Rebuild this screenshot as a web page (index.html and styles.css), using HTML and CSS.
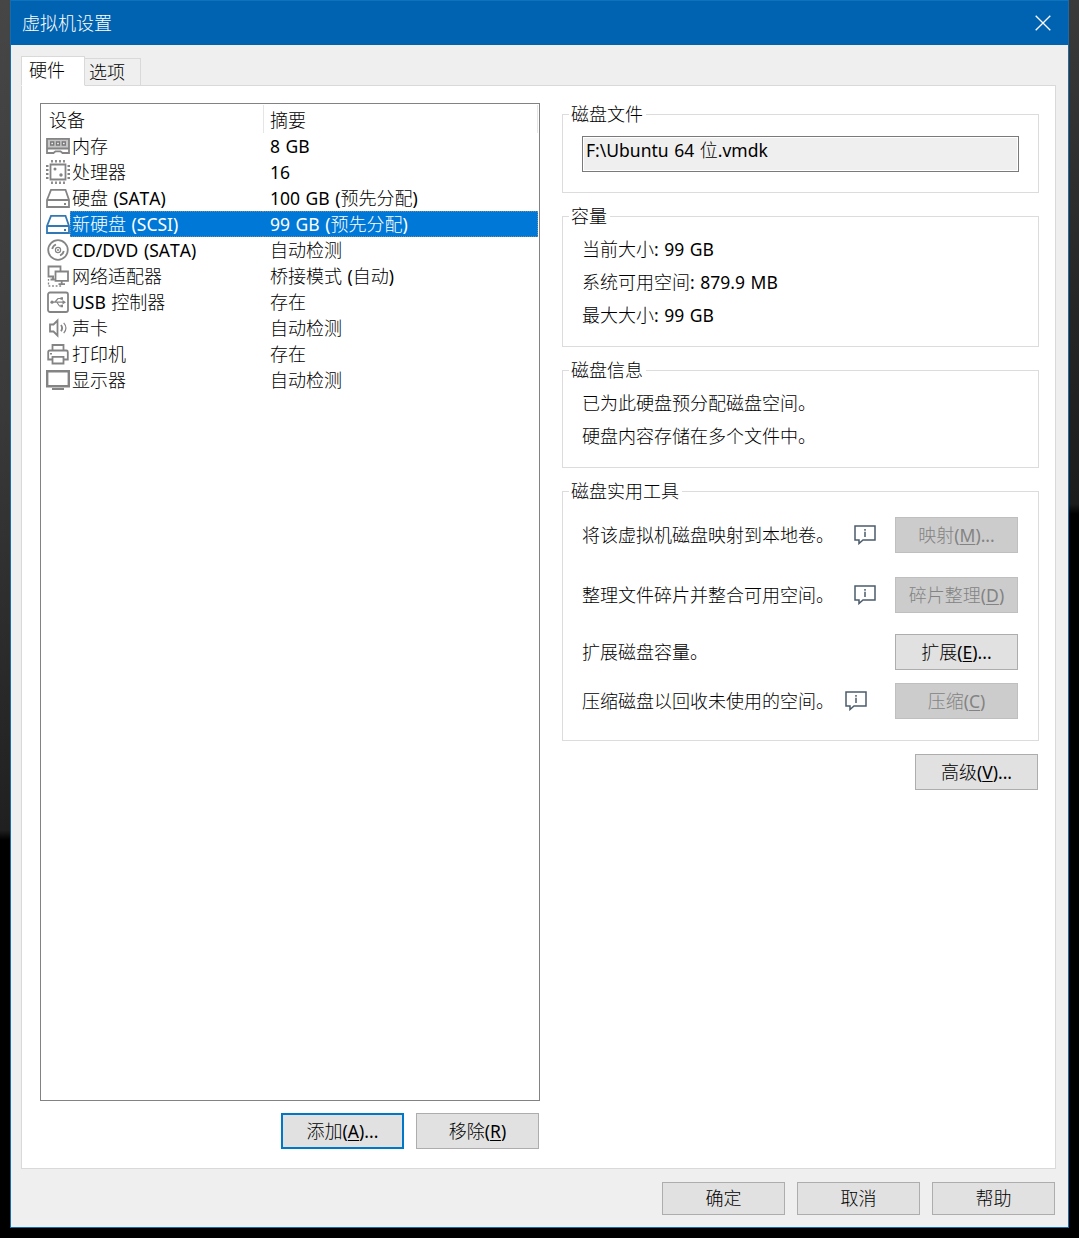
FILE: index.html
```html
<!DOCTYPE html>
<html lang="zh-CN">
<head>
<meta charset="utf-8">
<title>虚拟机设置</title>
<link rel="stylesheet" href="styles.css">
</head>
<body>
<div class="window">
  <header class="titlebar">
    <h1>虚拟机设置</h1>
    <svg class="close" width="16" height="16" viewBox="0 0 16 16"><path d="M.7.7l14.6 14.6M15.3.7L.7 15.3"/></svg>
  </header>
  <nav class="tabs"><div class="tab active">硬件</div><div class="tab">选项</div></nav>
  <main class="panel">
    <section class="left">
      <div class="list">
        <div class="row head"><span class="name">设备</span><span class="sum">摘要</span></div>
        <div class="row">
          <svg class="ico" viewBox="0 0 24 24"><path class="pale" d="M1 5h22v9H1z"/><path class="s" d="M1 4.900V19h6.500l2-1.700h5l2 1.700H23V4.900zM1 14.500h22"/><path class="chip" d="M4.700 8h3v3h-3zM10.500 8h3v3h-3zM16.300 8h3v3h-3z"/></svg>
          <span class="name">内存</span><span class="sum"><i>8 GB</i></span></div>
        <div class="row">
          <svg class="ico" viewBox="0 0 24 24"><path class="s" d="M4.500 4.500h15v15h-15z"/><path class="s" d="M6 0v2.500M10 0v2.500M14 0v2.500M18 0v2.500M6 21.500V24M10 21.500V24M14 21.500V24M18 21.500V24M0 6h2.500M0 10h2.500M0 14h2.500M0 18h2.500M21.500 6H24M21.500 10H24M21.500 14H24M21.500 18H24"/><circle class="f" cx="9" cy="9" r="1.500"/><circle class="f" cx="15" cy="15" r="1.700"/></svg>
          <span class="name">处理器</span><span class="sum"><i>16</i></span></div>
        <div class="row">
          <svg class="ico" viewBox="0 0 24 24"><path class="s" d="M1 14L5 3.800h14.500L23 14v7H1zM1 14h22"/><path class="f" d="M18 17h2v2h-2z"/></svg>
          <span class="name">硬盘<i> (SATA)</i></span><span class="sum"><i>100 GB (</i>预先分配<i>)</i></span></div>
        <div class="row selected">
          <svg class="ico" viewBox="0 0 24 24"><path class="s" d="M1 14L5 3.800h14.500L23 14v7H1zM1 14h22"/><path class="f" d="M18 17h2v2h-2z"/></svg>
          <span class="name">新硬盘<i> (SCSI)</i></span><span class="sum"><i>99 GB (</i>预先分配<i>)</i></span></div>
        <div class="row">
          <svg class="ico" viewBox="0 0 24 24"><circle class="s" cx="12" cy="12" r="9.800"/><circle class="s thin" cx="12" cy="12" r="2.600"/><circle class="f" cx="12" cy="12" r="1"/><path class="s" d="M6.200 11a6 6 0 0 1 3.800-4.500M17.800 13a6 6 0 0 1-3.800 4.500"/></svg>
          <span class="name"><i>CD/DVD (SATA)</i></span><span class="sum">自动检测</span></div>
        <div class="row">
          <svg class="ico" viewBox="0 0 24 24"><path class="s" d="M8 12.500H2.500v-10h12V7M4.500 15.500h4M7 12.500v3M9.500 7.500H22v9.300H9.500zM15.700 17v3M12.500 20.200h6.500"/><path class="s dots" d="M2.500 15v7M2.500 22h14"/></svg>
          <span class="name">网络适配器</span><span class="sum">桥接模式<i> (</i>自动<i>)</i></span></div>
        <div class="row">
          <svg class="ico" viewBox="0 0 24 24"><rect class="s" x="2" y="2.500" width="20" height="19.500" rx="2"/><path class="s thin" d="M6 12.200h12M9 12l3-3.500h3M11 12.500l2.500 3.500H16"/><path class="f" d="M16.500 10l3.500 2.200-3.500 2.200zM14.500 7.200h2.500v2.500h-2.500zM14.500 14.700H17v2.500h-2.500z"/><circle class="f" cx="6" cy="12.200" r="1.600"/></svg>
          <span class="name"><i>USB </i>控制器</span><span class="sum">存在</span></div>
        <div class="row">
          <svg class="ico" viewBox="0 0 24 24"><path class="s" d="M4 8.500h3.500L11.500 4.500v15l-4-4H4zM15 9q2.200 3 0 6.200"/><path class="s thin" d="M17.700 6.800q4.500 5.200 0 10.400"/></svg>
          <span class="name">声卡</span><span class="sum">自动检测</span></div>
        <div class="row">
          <svg class="ico" viewBox="0 0 24 24"><path class="s" d="M6.500 8.500V3h11v5.500M6 17.500H2.200V10q0-1.500 1.500-1.500h16.600q1.500 0 1.500 1.500v7.500H18M6.500 14.800h11V21.500h-11z"/><path class="f" d="M4 11h2v1.500H4z"/></svg>
          <span class="name">打印机</span><span class="sum">存在</span></div>
        <div class="row">
          <svg class="ico" viewBox="0 0 24 24"><path class="s thick" d="M1.200 3.200h21.600v15H1.200z"/><path class="f" d="M6 20h12v2H6z"/></svg>
          <span class="name">显示器</span><span class="sum">自动检测</span></div>
      </div>
      <div class="actions"><button class="btn primary">添加<i>(<u>A</u>)...</i></button><button class="btn">移除<i>(<u>R</u>)</i></button></div>
    </section>
    <section class="right">
      <fieldset class="file"><legend>磁盘文件</legend><div class="field"><i>F:\Ubuntu 64 </i>位<i>.vmdk</i></div></fieldset>
      <fieldset class="capacity"><legend>容量</legend>
        <p>当前大小<i>: 99 GB</i></p><p>系统可用空间<i>: 879.9 MB</i></p><p>最大大小<i>: 99 GB</i></p></fieldset>
      <fieldset class="info"><legend>磁盘信息</legend><p>已为此硬盘预分配磁盘空间。</p><p>硬盘内容存储在多个文件中。</p></fieldset>
      <fieldset class="tools"><legend>磁盘实用工具</legend>
        <div class="tool map"><span>将该虚拟机磁盘映射到本地卷。</span><svg class="tip" viewBox="0 0 22 20"><path d="M1 1h20v14H9l-4 3.500V15H1z"/><path d="M11 6.800V12M11 4v1.700"/></svg><button class="btn" disabled>映射<i>(<u>M</u>)...</i></button></div>
        <div class="tool defrag"><span>整理文件碎片并整合可用空间。</span><svg class="tip" viewBox="0 0 22 20"><path d="M1 1h20v14H9l-4 3.500V15H1z"/><path d="M11 6.800V12M11 4v1.700"/></svg><button class="btn" disabled>碎片整理<i>(<u>D</u>)</i></button></div>
        <div class="tool expand"><span>扩展磁盘容量。</span><button class="btn">扩展<i>(<u>E</u>)...</i></button></div>
        <div class="tool compact"><span>压缩磁盘以回收未使用的空间。</span><svg class="tip" viewBox="0 0 22 20"><path d="M1 1h20v14H9l-4 3.500V15H1z"/><path d="M11 6.800V12M11 4v1.700"/></svg><button class="btn" disabled>压缩<i>(<u>C</u>)</i></button></div>
      </fieldset>
      <button class="btn advanced">高级<i>(<u>V</u>)...</i></button>
    </section>
  </main>
  <footer class="footer"><button class="btn">确定</button><button class="btn">取消</button><button class="btn">帮助</button></footer>
</div>
</body>
</html>
```
FILE: styles.css
```css
* { box-sizing: border-box; margin: 0; padding: 0; }
body {
  height: 1238px;
  padding: 0 10px;
  overflow: hidden;
  background:
    linear-gradient(#464646, #3a3a3a 400px, #202020 830px, #000 840px) 0 0 / 10px 100% no-repeat,
    linear-gradient(#3a3a3a, #262626 300px, #1c1c1c 504px, #000 514px) 100% 0 / 10px 100% no-repeat,
    #000;
  color: #000;
  font: 300 18px/26px "Noto Sans CJK SC", sans-serif;
}
i {
  font: normal 400 17.5px/20px "Noto Sans", sans-serif;
  font-kerning: none;
  word-spacing: 1px;
  white-space: pre;
}
u { text-underline-offset: 2px; text-decoration-thickness: 1px; }

.window {
  display: flex;
  flex-direction: column;
  height: 1228px;
  border: 1px solid #1a6ca8;
  border-top: 0;
  background: #efefef;
}
.titlebar {
  display: flex;
  justify-content: space-between;
  align-items: center;
  height: 45px;
  padding: 0 17px 0 11px;
  border-top: 1px solid #0f72bd;
  background: #0063b1;
  color: #fff;
}
h1 { padding-bottom: 3px; font-size: 18px; font-weight: 300; }
.close { fill: none; stroke: #fff; stroke-width: 1.3; }

.tabs {
  display: flex;
  align-items: flex-end;
  height: 41px;
  padding-left: 10px;
  margin-bottom: -1px;
  z-index: 1;
}
.tab {
  width: 56px;
  height: 28px;
  padding-left: 4px;
  border: 1px solid #d9d9d9;
  border-left: 0;
  line-height: 25px;
}
.tab.active {
  width: 64px;
  height: 30px;
  padding-left: 7px;
  border-left: 1px solid #d9d9d9;
  border-bottom-color: #fff;
  background: #fff;
}

.panel {
  display: flex;
  gap: 22px;
  height: 1084px;
  margin: 0 12px 0 10px;
  padding: 17px 16px 0 18px;
  border: 1px solid #d9d9d9;
  background: #fff;
}
.left { width: 500px; }
.list { height: 998px; padding-right: 1px; border: 1px solid #828282; }
.row { display: grid; grid-template-columns: 29px 193px 1fr; height: 26px; line-height: 24px; }
.row > * { height: 26px; white-space: nowrap; }
.name { padding-left: 2px; }
.sum { padding-left: 7px; }
.head { grid-template-columns: 223px 1fr; height: 29px; padding-top: 1px; }
.head > * { height: 28px; border-right: 1px solid #e5e5e5; line-height: 28px; }
.head .name { padding-left: 8px; }
.head .sum { padding-left: 6px; }
.selected .name, .selected .sum {
  border: 0 dotted #6f8fa8;
  border-width: 1px 0;
  background: #0078d7;
  color: #fff;
  line-height: 22px;
}
.selected .name { border-left-width: 1px; padding-left: 1px; }
.selected .sum { border-right-width: 1px; }
.ico { width: 24px; height: 24px; margin: 1px 0 0 5px; color: #848484; }
.row .ico { height: 24px; }
.selected .ico { color: #3278b4; }
.s { fill: none; stroke: currentColor; stroke-width: 1.8; }
.thin { stroke-width: 1.2; }
.thick { stroke-width: 2.4; }
.dots { stroke-dasharray: 1.8 1.8; stroke-width: 1.3; }
.f { fill: currentColor; }
.pale { fill: #c6c6c6; }
.chip { fill: #eee; stroke: #777; stroke-width: 1.3; }

.btn {
  display: block;
  width: 123px;
  height: 36px;
  border: 1px solid #adadad;
  background: #e1e1e1;
  color: #000;
  font: inherit;
  line-height: 32px;
  padding-bottom: 2px;
  white-space: nowrap;
}
.btn.primary { border: 2px solid #0078c8; line-height: 30px; }
.btn:disabled { border-color: #bfbfbf; background: #ccc; color: #838383; }
.actions { display: flex; justify-content: flex-end; gap: 12px; padding: 12px 1px 0 0; }

.right { width: 477px; padding-top: 11px; }
fieldset {
  display: flow-root;
  width: 477px;
  padding: 0 19px;
  border: 1px solid #dcdcdc;
}
legend { float: left; height: 26px; margin: -14px 0 -12px -13px; padding: 0 3px 0 2px; background: #fff; line-height: 24px; }
fieldset > :not(legend) { clear: both; }
.file { height: 79px; margin-bottom: 23px; }
.capacity { height: 131px; margin-bottom: 23px; }
.info { height: 98px; margin-bottom: 23px; }
.tools { height: 250px; margin-bottom: 13px; }
.field {
  width: 437px;
  height: 36px;
  margin-top: 21px;
  padding-left: 3px;
  border: 1px solid #7a7a7a;
  box-shadow: inset 0 0 0 1px #fff;
  background: #efefef;
  line-height: 25px;
}
p { height: 33px; line-height: 31px; }
legend + p { margin-top: 16px; }
.tool { display: flex; align-items: center; height: 36px; }
.tool span { width: 272px; padding-bottom: 2px; white-space: nowrap; }
.tool .btn { margin-left: auto; margin-right: 1px; }
.tip { width: 22px; height: 20px; fill: none; stroke: #4b5c6b; stroke-width: 1.5; }
.map { margin-top: 25px; }
.defrag { margin-top: 24px; }
.expand { margin-top: 21px; }
.compact { margin-top: 13px; }
.compact span { width: 263px; }
.advanced { margin: 0 1px 0 auto; }

.footer { display: flex; gap: 12px; justify-content: flex-end; padding: 13px 13px 0 0; }
.footer .btn { height: 33px; line-height: 29px; }
```
